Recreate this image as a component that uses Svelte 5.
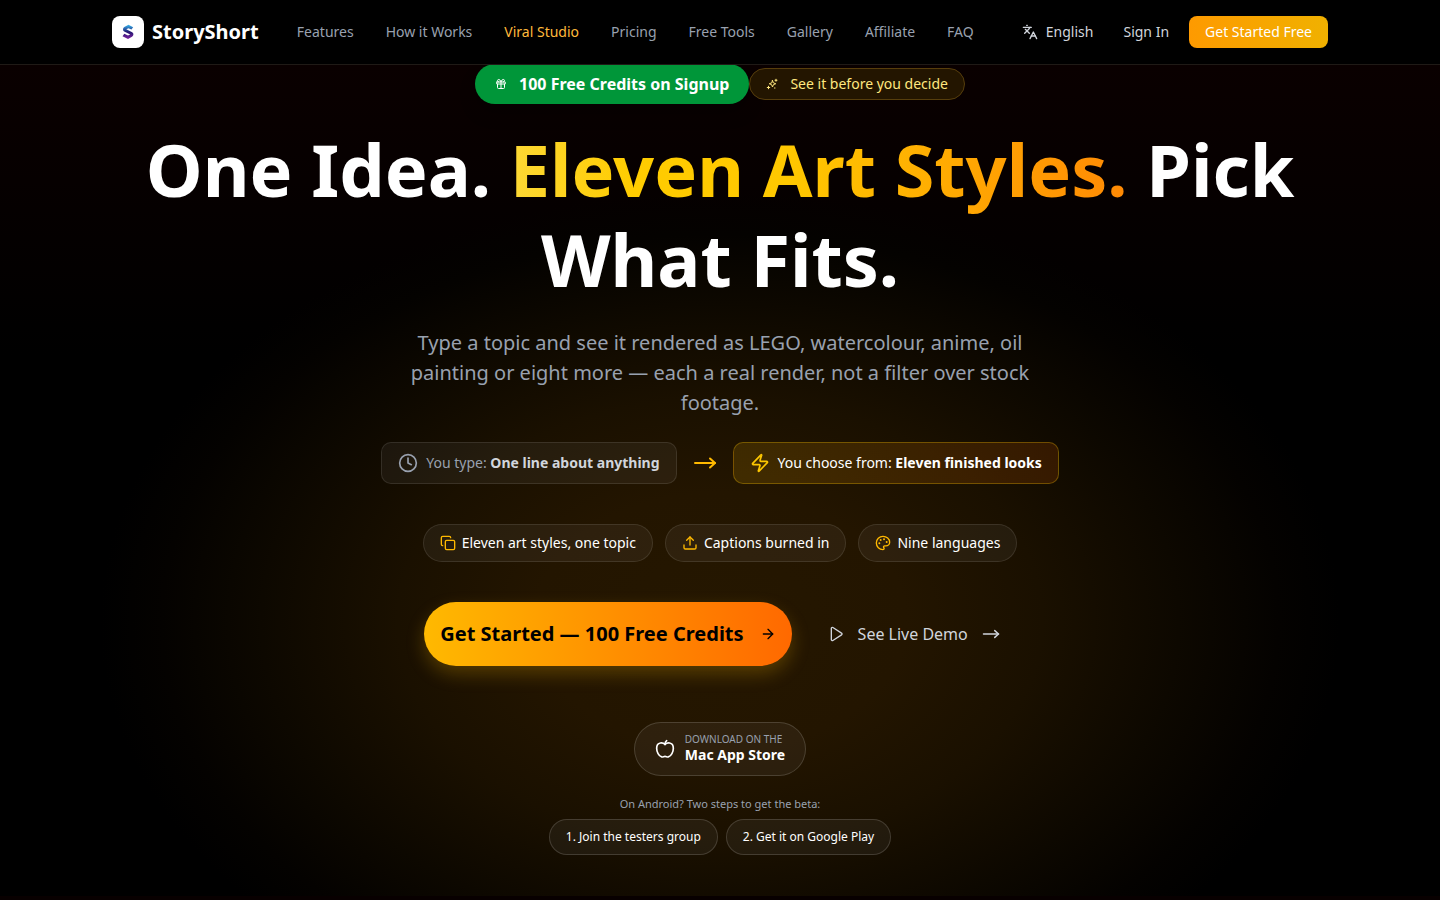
<script>
    const navLinks = [
        {name: "Features", href: "#features"},
        {name: "How it Works", href: "#how-it-works"},
        {name: "Viral Studio", href: "#viral-studio", active: true},
        {name: "Pricing", href: "#pricing"},
        {name: "Free Tools", href: "#tools"},
        {name: "Gallery", href: "#gallery"},
        {name: "Affiliate", href: "#affiliate"},
        {name: "FAQ", href: "#faq"},
    ];

    // 24x24 stroke icons
    const icons = {
        languages: ["m5 8 6 6", "m4 14 6-6 2-3", "M2 5h12", "M7 2h1", "m22 22-5-10-5 10", "M14 18h6"],
        gift: ["M4 8h16a1 1 0 0 1 1 1v2a1 1 0 0 1-1 1H4a1 1 0 0 1-1-1V9a1 1 0 0 1 1-1z", "M12 8v13", "M19 12v7a2 2 0 0 1-2 2H7a2 2 0 0 1-2-2v-7", "M7.5 8a2.5 2.5 0 0 1 0-5A4.8 8 0 0 1 12 8a4.8 8 0 0 1 4.5-5 2.5 2.5 0 0 1 0 5"],
        clock: ["M12 2a10 10 0 1 0 0 20 10 10 0 0 0 0-20z", "M12 6v6l4 2"],
        zap: ["M4 14a1 1 0 0 1-.78-1.63l9.9-10.2a.5.5 0 0 1 .86.46l-1.92 6.02A1 1 0 0 0 13 10h7a1 1 0 0 1 .78 1.63l-9.9 10.2a.5.5 0 0 1-.86-.46l1.92-6.02A1 1 0 0 0 11 14z"],
        longArrow: ["M2 12h20", "m17 7.500 5 4.500-5 4.500"],
        copy: ["M10 8h10a2 2 0 0 1 2 2v10a2 2 0 0 1-2 2H10a2 2 0 0 1-2-2V10a2 2 0 0 1 2-2z", "M4 16c-1.1 0-2-.9-2-2V4c0-1.1.9-2 2-2h10c1.1 0 2 .9 2 2"],
        upload: ["M3 15v4a2 2 0 0 0 2 2h14a2 2 0 0 0 2-2v-4", "m7 8 5-5 5 5", "M12 3v12"],
        palette: [
            "M12 2C6.5 2 2 6.5 2 12s4.5 10 10 10c.926 0 1.648-.746 1.648-1.688 0-.437-.18-.835-.437-1.125-.29-.289-.438-.652-.438-1.125a1.64 1.64 0 0 1 1.668-1.668h1.996c3.051 0 5.555-2.503 5.555-5.554C21.965 6.012 17.461 2 12 2z",
            "M13 6.500a.5.5 0 1 0 1 0 .5.5 0 1 0-1 0",
            "M17 10.500a.5.5 0 1 0 1 0 .5.5 0 1 0-1 0",
            "M8 7.500a.5.5 0 1 0 1 0 .5.5 0 1 0-1 0",
            "M6 12.500a.5.5 0 1 0 1 0 .5.5 0 1 0-1 0",
        ],
        arrow: ["M5 12h14", "m12 5 7 7-7 7"],
        play: ["M5 3.500v17a1.500 1.500 0 0 0 2.300 1.200l13-8.400a1.500 1.500 0 0 0 0-2.600l-13-8.400A1.500 1.500 0 0 0 5 3.500z"],
        apple: ["M12 6.500C10.500 5 8.500 4.500 6.500 4.800 3.500 5.300 2 8 2 11c0 4.500 2.500 9.500 6 10.500 1.500.4 2.500-.7 4-.7s2.500 1.100 4 .7c3.500-1 6-6 6-10.500 0-3-1.500-5.700-4.500-6.200-2-.3-4 .2-5.500 1.700z", "M12 6.500C12 4.500 12.500 3 14 2"],
        sparkles: ["M13 5l1.800 4.700L19.500 11.500l-4.700 1.800L13 18l-1.800-4.700L6.500 11.500l4.700-1.800z", "M20 2.500v4", "M18 4.500h4", "M5 16.500v5", "M2.500 19h5", "M17 20h1"],
    };

    const chips = [
        {label: "Eleven art styles, one topic", icon: "copy"},
        {label: "Captions burned in", icon: "upload"},
        {label: "Nine languages", icon: "palette"},
    ];
</script>

{#snippet icon(name, size, stroke = 2)}
    <svg width={size} height={size} viewBox="0 0 24 24" fill="none" stroke="currentColor" stroke-width={stroke} stroke-linecap="round" stroke-linejoin="round" aria-hidden="true">
        {#each icons[name] as d}
            <path {d} />
        {/each}
    </svg>
{/snippet}

<header>
    <div class="bar">
        <a class="brand" href="#home">
            <span class="logo">
                <svg width="14" height="16" viewBox="0 0 14 16" aria-hidden="true">
                    <defs>
                        <linearGradient id="ribbon" x1="0" y1="0" x2="0" y2="1">
                            <stop offset="0" stop-color="#35b8f0" />
                            <stop offset="0.5" stop-color="#241a72" />
                            <stop offset="1" stop-color="#7d1fa0" />
                        </linearGradient>
                    </defs>
                    <path d="M7.500 0.800 12.200 3.200 10.400 5.600 7.500 4.300 5.300 5.300 11.200 8.200q1.400.8 1.200 2.300-.1 1.500-1.400 2.200L7 15 1.500 12.200 3.300 9.700 7 11.500 9.200 10.500 3.200 7.600Q2 6.900 2 5.300 2 3.700 3.300 3z" fill="url(#ribbon)" />
                </svg>
            </span>
            StoryShort
        </a>
        <nav>
            {#each navLinks as {name, href, active}}
                <a {href} class:active>{name}</a>
            {/each}
        </nav>
        <div class="account">
            <button class="language">{@render icon("languages", 16)} English</button>
            <a class="signin" href="#signin">Sign In</a>
            <a class="start" href="#signup">Get Started Free</a>
        </div>
    </div>
</header>

<main>
    <div class="badges">
        <span class="credits">{@render icon("gift", 12)} 100 Free Credits on Signup</span>
        <span class="before">{@render icon("sparkles", 12)} See it before you decide</span>
    </div>

    <h1>One Idea. <span>Eleven Art Styles.</span> Pick What Fits.</h1>
    <p class="lead">Type a topic and see it rendered as LEGO, watercolour, anime, oil painting or eight more — each a real render, not a filter over stock footage.</p>

    <div class="compare">
        <div class="box">{@render icon("clock", 20)} <span>You type: <strong>One line about anything</strong></span></div>
        <span class="to">{@render icon("longArrow", 24)}</span>
        <div class="box result">{@render icon("zap", 20)} <span>You choose from: <strong>Eleven finished looks</strong></span></div>
    </div>

    <ul class="chips">
        {#each chips as chip}
            <li>{@render icon(chip.icon, 16)} {chip.label}</li>
        {/each}
    </ul>

    <div class="actions">
        <a class="cta" href="#signup">Get Started — 100 Free Credits {@render icon("arrow", 16)}</a>
        <a class="demo" href="#demo">{@render icon("play", 16)} See Live Demo {@render icon("longArrow", 18)}</a>
    </div>

    <a class="store" href="#mac">
        {@render icon("apple", 20)}
        <span class="store-text"><small>Download on the</small><b>Mac App Store</b></span>
    </a>

    <p class="android">On Android? Two steps to get the beta:</p>
    <div class="steps">
        <a href="#testers">1. Join the testers group</a>
        <a href="#play">2. Get it on Google Play</a>
    </div>
</main>

<style>
    :global(body) {
        background: #080000;
        color: #fff;
        font-family: "Noto Sans", sans-serif;
    }
    a {
        color: inherit;
        text-decoration: none;
    }
    svg {
        flex: none;
        display: block;
    }
    header {
        position: relative;
        z-index: 1;
        border-bottom: 1px solid #1f1a16;
        background: #000;
        font-size: 14px;
        line-height: 20px;
    }
    .bar {
        display: flex;
        align-items: center;
        justify-content: space-between;
        max-width: 1216px;
        height: 64px;
        margin: 0 auto;
    }
    .brand {
        display: flex;
        align-items: center;
        gap: 8px;
        font-size: 20px;
        font-weight: 700;
        line-height: 28px;
    }
    .logo {
        display: flex;
        align-items: center;
        justify-content: center;
        width: 32px;
        height: 32px;
        border-radius: 8px;
        background: #fff;
    }
    nav {
        display: flex;
        gap: 32px;
        color: #99a1af;
    }
    nav .active {
        color: #ffb93b;
    }
    .account {
        display: flex;
        align-items: center;
        gap: 8px;
        color: #d1d5dc;
    }
    .language {
        display: flex;
        align-items: center;
        gap: 8px;
        padding: 6px 10px;
        border: 0;
        background: none;
        color: inherit;
        font: inherit;
    }
    .signin {
        padding: 6px 12px;
    }
    .start {
        padding: 6px 16px;
        border-radius: 8px;
        background: linear-gradient(to right, #fe9a00, #f0b100);
        color: #fff;
    }

    /* the hero starts under the header's border */
    main {
        display: flex;
        flex-direction: column;
        align-items: center;
        margin-top: -1px;
        padding-bottom: 41px;
        background:
            radial-gradient(ellipse 620px 430px at 50% 67%, #251700 0%, #231500 30%, #1a1000 52%, #0d0800 74%, #040200 90%, transparent 100%),
            linear-gradient(#0a0000, #000 35%);
    }
    .badges {
        display: flex;
        align-items: center;
        justify-content: center;
    }
    .credits,
    .before {
        display: flex;
        align-items: center;
        gap: 12px;
        border-radius: 20px;
    }
    .credits {
        padding: 8px 20px;
        background: #009639;
        font-size: 16px;
        font-weight: 700;
        line-height: 24px;
        box-shadow: 0 10px 15px #00000040;
    }
    .before {
        padding: 5px 16px;
        border: 1px solid #573e0c;
        background: #231500;
        color: #ffe77f;
        font-size: 14px;
        line-height: 20px;
    }
    h1 {
        max-width: 1216px;
        margin: 20px 0 24px;
        font-size: 72px;
        font-weight: 700;
        line-height: 90px;
        text-align: center;
    }
    h1 span {
        background: linear-gradient(to right, #fdd835, #ffcc00 20%, #ffc800 45%, #ff8904);
        background-clip: text;
        color: transparent;
    }
    .lead {
        max-width: 672px;
        margin: 0 0 24px;
        color: #99a1af;
        font-size: 20px;
        line-height: 30px;
        text-align: center;
    }
    .compare {
        display: flex;
        align-items: center;
        gap: 16px;
        font-size: 14px;
        line-height: 20px;
    }
    .box {
        display: flex;
        align-items: center;
        gap: 8px;
        padding: 10px 16px;
        border: 1px solid #ffffff1a;
        border-radius: 10px;
        background: #ffffff0d;
        color: #99a1af;
    }
    .box strong {
        color: #d1d5dc;
    }
    .to {
        color: #ffb900;
    }
    .result {
        border-color: #fdc7004d;
        background: linear-gradient(to right, #f0b10026, #ff690026);
        color: #fff;
    }
    .result strong {
        color: #fff;
    }
    .result :global(svg) {
        color: #fdc700;
    }
    .chips {
        display: flex;
        gap: 12px;
        margin: 40px 0;
        padding: 0;
        list-style: none;
    }
    .chips li {
        display: flex;
        align-items: center;
        gap: 6px;
        padding: 8px 16px;
        border: 1px solid #ffffff1a;
        border-radius: 19px;
        background: #ffffff0d;
        font-size: 14px;
        line-height: 20px;
    }
    .chips :global(svg) {
        color: #ffb900;
    }
    .actions {
        display: flex;
        align-items: center;
        gap: 20px;
    }
    .cta,
    .demo {
        display: flex;
        align-items: center;
        gap: 16px;
        padding: 18px 16px;
    }
    .cta {
        border-radius: 32px;
        background: linear-gradient(to right, #ffb900, #ff6900);
        box-shadow: 0 8px 18px #f0b10040;
        color: #000;
        font-size: 20px;
        font-weight: 700;
        line-height: 28px;
    }
    .demo {
        gap: 14px;
        color: #d1d5dc;
        font-size: 16px;
        line-height: 24px;
    }
    .store {
        display: flex;
        align-items: center;
        gap: 10px;
        margin-top: 56px;
        padding: 10px 20px;
        border: 1px solid #ffffff26;
        border-radius: 27px;
        background: #ffffff0d;
    }
    .store-text {
        display: flex;
        flex-direction: column;
    }
    small {
        color: #99a1af;
        font-size: 10px;
        line-height: 12px;
        text-transform: uppercase;
    }
    b {
        font-size: 14px;
        line-height: 20px;
    }
    .android {
        margin: 20px 0 7px;
        color: #99a1af;
        font-size: 11px;
        line-height: 16px;
    }
    .steps {
        display: flex;
        gap: 8px;
    }
    .steps a {
        padding: 9px 16px;
        border: 1px solid #ffffff26;
        border-radius: 18px;
        background: #ffffff0d;
        font-size: 12px;
        line-height: 16px;
    }
</style>
